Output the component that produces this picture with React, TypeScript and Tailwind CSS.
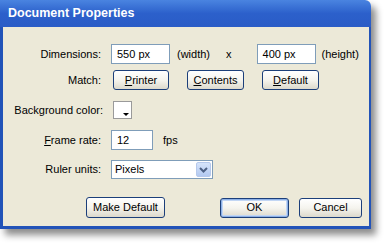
import React from 'react';

const font = { fontFamily: '"Liberation Sans", Arial, sans-serif' };

function XpButton({ children, w, isDefault }: { children: React.ReactNode; w: string; isDefault?: boolean }) {
  return (
    <button
      className={`${w} h-[20px] rounded-[3px] border border-[#1c3f7a] bg-gradient-to-b from-white via-[#f5f4ee] to-[#dcd9cc] text-[11px] text-black leading-none flex items-center justify-center ${
        isDefault ? 'shadow-[inset_0_0_0_1px_#8cb0e6,inset_0_0_0_2px_#c2d6f4]' : ''
      }`}
    >
      {children}
    </button>
  );
}

function TextBox({ value, w }: { value: string; w: string }) {
  return (
    <div className={`${w} h-[20px] border border-[#7f9db9] bg-white text-[11px] text-black leading-none flex items-center pl-[5px]`}>
      {value}
    </div>
  );
}

function Label({ children }: { children: React.ReactNode }) {
  return <div className="w-[98px] text-right text-[11px] text-black leading-none">{children}</div>;
}

export default function App() {
  return (
    <div className="w-[386px] h-[247px] bg-white overflow-hidden" style={font}>
      <div className="w-[371px] h-[229px] flex flex-col rounded-tr-[6px] overflow-hidden shadow-[5px_6px_7px_rgba(0,0,0,0.45)]">
        {/* title bar */}
        <div className="h-[27px] shrink-0 bg-gradient-to-b from-[#4a84e0] via-[#2c60cb] to-[#2a5cc6] flex items-center pl-[8px]">
          <span className="text-white font-bold text-[12.5px] leading-none">Document Properties</span>
        </div>

        {/* body */}
        <div className="flex-1 bg-[#ece9d8] border-l-[3px] border-r-[2px] border-b-[3px] border-[#2253b8] flex flex-col">
          <div className="flex items-center mt-[17px] h-[20px]">
            <Label>Dimensions:</Label>
            <div className="ml-[10px]">
              <TextBox value="550 px" w="w-[59px]" />
            </div>
            <span className="ml-[7px] text-[11px]">(width)</span>
            <span className="ml-[16px] text-[11px]">x</span>
            <div className="ml-[25px]">
              <TextBox value="400 px" w="w-[59px]" />
            </div>
            <span className="ml-[6px] text-[11px]">(height)</span>
          </div>

          <div className="flex items-center mt-[6px] h-[20px]">
            <Label>Match:</Label>
            <div className="ml-[12px] flex gap-[18px]">
              <XpButton w="w-[56px]"><span><u>P</u>rinter</span></XpButton>
              <XpButton w="w-[57px]"><span><u>C</u>ontents</span></XpButton>
              <XpButton w="w-[57px]"><span><u>D</u>efault</span></XpButton>
            </div>
          </div>

          <div className="flex items-center mt-[11px] h-[18px]">
            <div className="w-[100px] text-right text-[11px] leading-none">Background color:</div>
            <div className="ml-[10px] w-[19px] h-[18px] border border-[#9a9a9a] bg-white relative">
              <div className="absolute right-[2px] bottom-[2px] w-0 h-0 border-l-[3px] border-r-[3px] border-t-[3px] border-l-transparent border-r-transparent border-t-black" />
            </div>
          </div>

          <div className="flex items-center mt-[11px] h-[20px]">
            <Label><u>F</u>rame rate:</Label>
            <div className="ml-[10px]">
              <TextBox value="12" w="w-[42px]" />
            </div>
            <span className="ml-[10px] text-[11px]">fps</span>
          </div>

          <div className="flex items-center mt-[10px] h-[19px]">
            <Label>Ruler units:</Label>
            <div className="ml-[10px] w-[102px] h-[19px] border border-[#7f9db9] bg-white flex items-center">
              <span className="flex-1 pl-[3px] text-[11px] leading-none">Pixels</span>
              <div className="w-[15px] h-[15px] mr-[1px] rounded-[2px] bg-gradient-to-b from-[#d6e4fb] to-[#b3c9f0] border border-[#b6c9ec] flex items-center justify-center">
                <svg width="9" height="6" viewBox="0 0 9 6">
                  <path d="M1 1 L4.5 4.5 L8 1" stroke="#4d6185" strokeWidth="2" fill="none" />
                </svg>
              </div>
            </div>
          </div>

          <div className="flex items-center mt-[18px]">
            <div className="ml-[83px]">
              <XpButton w="w-[79px] h-[21px]">Make Default</XpButton>
            </div>
            <div className="ml-[55px]">
              <XpButton w="w-[69px]" isDefault>OK</XpButton>
            </div>
            <div className="ml-[10px]">
              <XpButton w="w-[63px]">Cancel</XpButton>
            </div>
          </div>
        </div>
      </div>
    </div>
  );
}
